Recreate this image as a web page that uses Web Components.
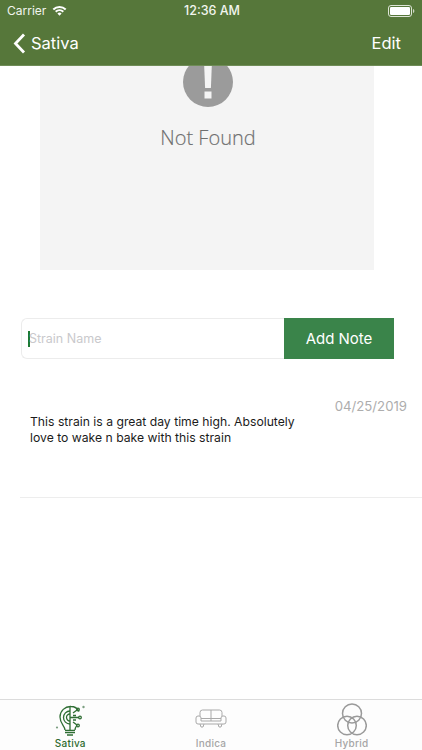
<!DOCTYPE html>
<html><head><meta charset="utf-8"><style>
html,body{margin:0;padding:0;background:#fff}
body{width:422px;height:750px;overflow:hidden;font-family:Inter,"Liberation Sans",Arial,sans-serif}
app-shell{height:750px}
</style></head><body>
<app-shell>
  <nav-header slot="top" back="Sativa" action="Edit"></nav-header>
  <not-found-card></not-found-card>
  <note-form placeholder="Strain Name" label="Add Note"></note-form>
  <note-row date="04/25/2019">This strain is a great day time high. Absolutely love to wake n bake with this strain</note-row>
  <tab-bar slot="bottom"></tab-bar>
</app-shell>
<script>
function def(name,html,init){
  customElements.define(name,class extends HTMLElement{
    constructor(){super();this.attachShadow({mode:'open'}).innerHTML=html;}
    connectedCallback(){if(init)init(this,this.shadowRoot);}
  });
}
def('app-shell',`<style>:host{display:flex;flex-direction:column;width:422px;height:750px;background:#fff}
main{flex:1;min-height:0;display:flex;flex-direction:column;overflow:hidden}</style>
<slot name="top"></slot><main><slot></slot></main><slot name="bottom"></slot>`);

def('nav-header',`<style>:host{display:block;height:66px;box-sizing:border-box;background:#56773a;color:#fff;border-bottom:1px solid #6f8c57}
.status{display:grid;grid-template-columns:1fr auto 1fr;align-items:center;height:21px;padding:0 7px;font:12px Inter,sans-serif;color:#f2f5ee}
.l{display:flex;align-items:center;gap:6px}.r{display:flex;justify-content:flex-end}
.t{font-weight:500;font-size:12.5px;position:relative;left:1px}
.bar{display:flex;justify-content:space-between;align-items:center;height:44px;padding:0 21px 0 13px;font:16.500px Inter,sans-serif}
.back{display:flex;align-items:center;gap:5px}
</style>
<div class="status"><div class="l"><span>Carrier</span>
<svg width="15" height="11" viewBox="0 0 15 11"><path d="M.6 3.700a10 10 0 0 1 13.800 0L13 5.200a8 8 0 0 0-11 0zM3 6.100a6.600 6.600 0 0 1 9 0L10.600 7.500a4.600 4.600 0 0 0-6.200 0zM5.400 8.500a3.200 3.200 0 0 1 4.200 0L7.500 10.700z" fill="#fff"/></svg></div>
<div class="t">12:36 AM</div>
<div class="r"><svg width="27" height="12" viewBox="0 0 27 12"><rect x=".5" y=".5" width="23" height="11" rx="2.500" fill="none" stroke="#dfe6d8"/><rect x="2" y="2" width="20" height="8" rx="1.200" fill="#fff"/><path d="M25 4v4c.9-.3 1.300-1.100 1.300-2s-.4-1.700-1.300-2z" fill="#cdd6c3"/></svg></div></div>
<div class="bar"><div class="back"><svg width="13" height="21" viewBox="0 0 13 21"><path d="M11 1.500 2.500 10.500 11 19.500" fill="none" stroke="#fff" stroke-width="2.800"/></svg><span id="b"></span></div><span id="a"></span></div>`,
(h,s)=>{s.getElementById('b').textContent=h.getAttribute('back');s.getElementById('a').textContent=h.getAttribute('action');});

def('not-found-card',`<style>:host{display:flex;flex-direction:column;align-items:center;box-sizing:border-box;width:334px;height:204px;margin:0 0 0 40px;padding-left:2px;background:#f4f4f4;overflow:hidden;flex:none}
svg{margin-top:-9px;flex:none}
span{margin-top:15px;font:300 20px/32px "Open Sans",sans-serif;color:#6f6f6f;-webkit-text-stroke:.15px #6f6f6f}</style>
<svg width="50" height="50" viewBox="0 0 50 50"><circle cx="25" cy="25" r="25" fill="#9b9b9b"/><path d="M21.200 9h7.600l-.9 22h-5.800z" fill="#f4f4f4"/><rect x="21.500" y="34.500" width="7" height="7" fill="#f4f4f4"/></svg>
<span>Not Found</span>`);

def('note-form',`<style>:host{display:flex;flex:none;margin:48px 28px 0 21px;height:41px}
.input{flex:1;box-sizing:border-box;border:1px solid #ececec;border-right:0;border-radius:6px 0 0 6px;display:flex;align-items:center;padding-left:6px;font:12.500px Inter,sans-serif;color:#c9c9cc;background:#fff}
.caret{width:2px;height:16px;background:#1d7a33;margin-right:-1px;flex:none}
button{all:unset;width:110px;background:#3a844a;color:#fff;text-align:center;font:15px Inter,sans-serif;box-sizing:border-box;padding-bottom:1px}</style>
<div class="input"><i class="caret"></i><span id="p"></span></div><button id="b"></button>`,
(h,s)=>{s.getElementById('p').textContent=h.getAttribute('placeholder');s.getElementById('b').textContent=h.getAttribute('label');});

def('note-row',`<style>:host{display:block;flex:none;margin:31px 0 0 20px;height:108px;box-sizing:border-box;border-bottom:1px solid #ededed}
.date{display:flex;justify-content:flex-end;padding-right:15px;font:13.200px/16px Inter,sans-serif;color:#adadad;margin-top:8px}
.text{margin:0 0 0 10px;width:275px;font:12.200px/16px Inter,sans-serif;color:#1b1b1b}</style>
<div class="date" id="d"></div><div class="text"><slot></slot></div>`,
(h,s)=>{s.getElementById('d').textContent=h.getAttribute('date');});

def('tab-bar',`<style>:host{display:grid;grid-template-columns:repeat(3,1fr);flex:none;height:51px;box-sizing:border-box;border-top:1px solid #dcdcdc;background:#fdfdfd}
.tab{display:flex;flex-direction:column;align-items:center;font:500 10px/12px Inter,sans-serif;color:#a6a6a6;letter-spacing:.25px}
.icon{height:37px;display:flex;align-items:flex-end;flex:none}
.active{color:#2e6b2f}</style>
<div class="tab active"><div class="icon"><svg width="34" height="33" viewBox="0 0 34 33" fill="none" stroke="#2f6e34" stroke-width="1.300" style="margin-bottom:1px"><circle cx="30.500" cy="4" r="1.200" fill="#7d9f82" stroke="none"/><circle cx="4" cy="24.500" r="1.100" fill="#7d9f82" stroke="none"/><path d="M12 27c0-4-5-6-5-13a10.500 10.500 0 0 1 11-10.500c4 0 6.500 2 8 5"/><path d="M22 27c0-2 1-3.500 2-5"/><path d="M12 27.500h10M12 29.700h10M14 32h6"/><path d="M17 3.500V27"/><path d="M17 8a6.500 6.500 0 0 0 0 13"/><path d="M17 11a3.500 3.500 0 0 0 0 7"/><path d="M17 14.500h9M20 10l4-3M20 19l4 3M20 12.500h3M20 17h3"/><circle cx="27" cy="14.500" r="1.300"/><circle cx="25" cy="6.500" r="1.300"/><circle cx="25" cy="22.500" r="1.300"/></svg></div><span>Sativa</span></div>
<div class="tab"><div class="icon"><svg width="32" height="19" viewBox="0 0 32 19" style="margin-bottom:9px" fill="none" stroke="#a9a9a9" stroke-width="1"><path d="M5 7V3.500A2.500 2.500 0 0 1 7.500 1h17A2.500 2.500 0 0 1 27 3.500V7"/><path d="M16 1v11"/><path d="M3 7h1a2 2 0 0 1 2 2v3h20V9a2 2 0 0 1 2-2h1a2 2 0 0 1 2 2v4a2 2 0 0 1-2 2H3a2 2 0 0 1-2-2V9a2 2 0 0 1 2-2z"/><path d="M6 9.500h20"/><path d="M5 15l1 3h2l1-3M23 15l1 3h2l1-3"/></svg></div><span>Indica</span></div>
<div class="tab"><div class="icon"><svg width="30" height="33" viewBox="0 0 30 33" fill="none" stroke="#9a9a9a" stroke-width="1.500" style="margin-bottom:1px"><circle cx="15" cy="10.500" r="9.500"/><circle cx="10" cy="22.500" r="9.300"/><circle cx="20" cy="22.500" r="9.300"/></svg></div><span>Hybrid</span></div>`);
</script></body></html>
